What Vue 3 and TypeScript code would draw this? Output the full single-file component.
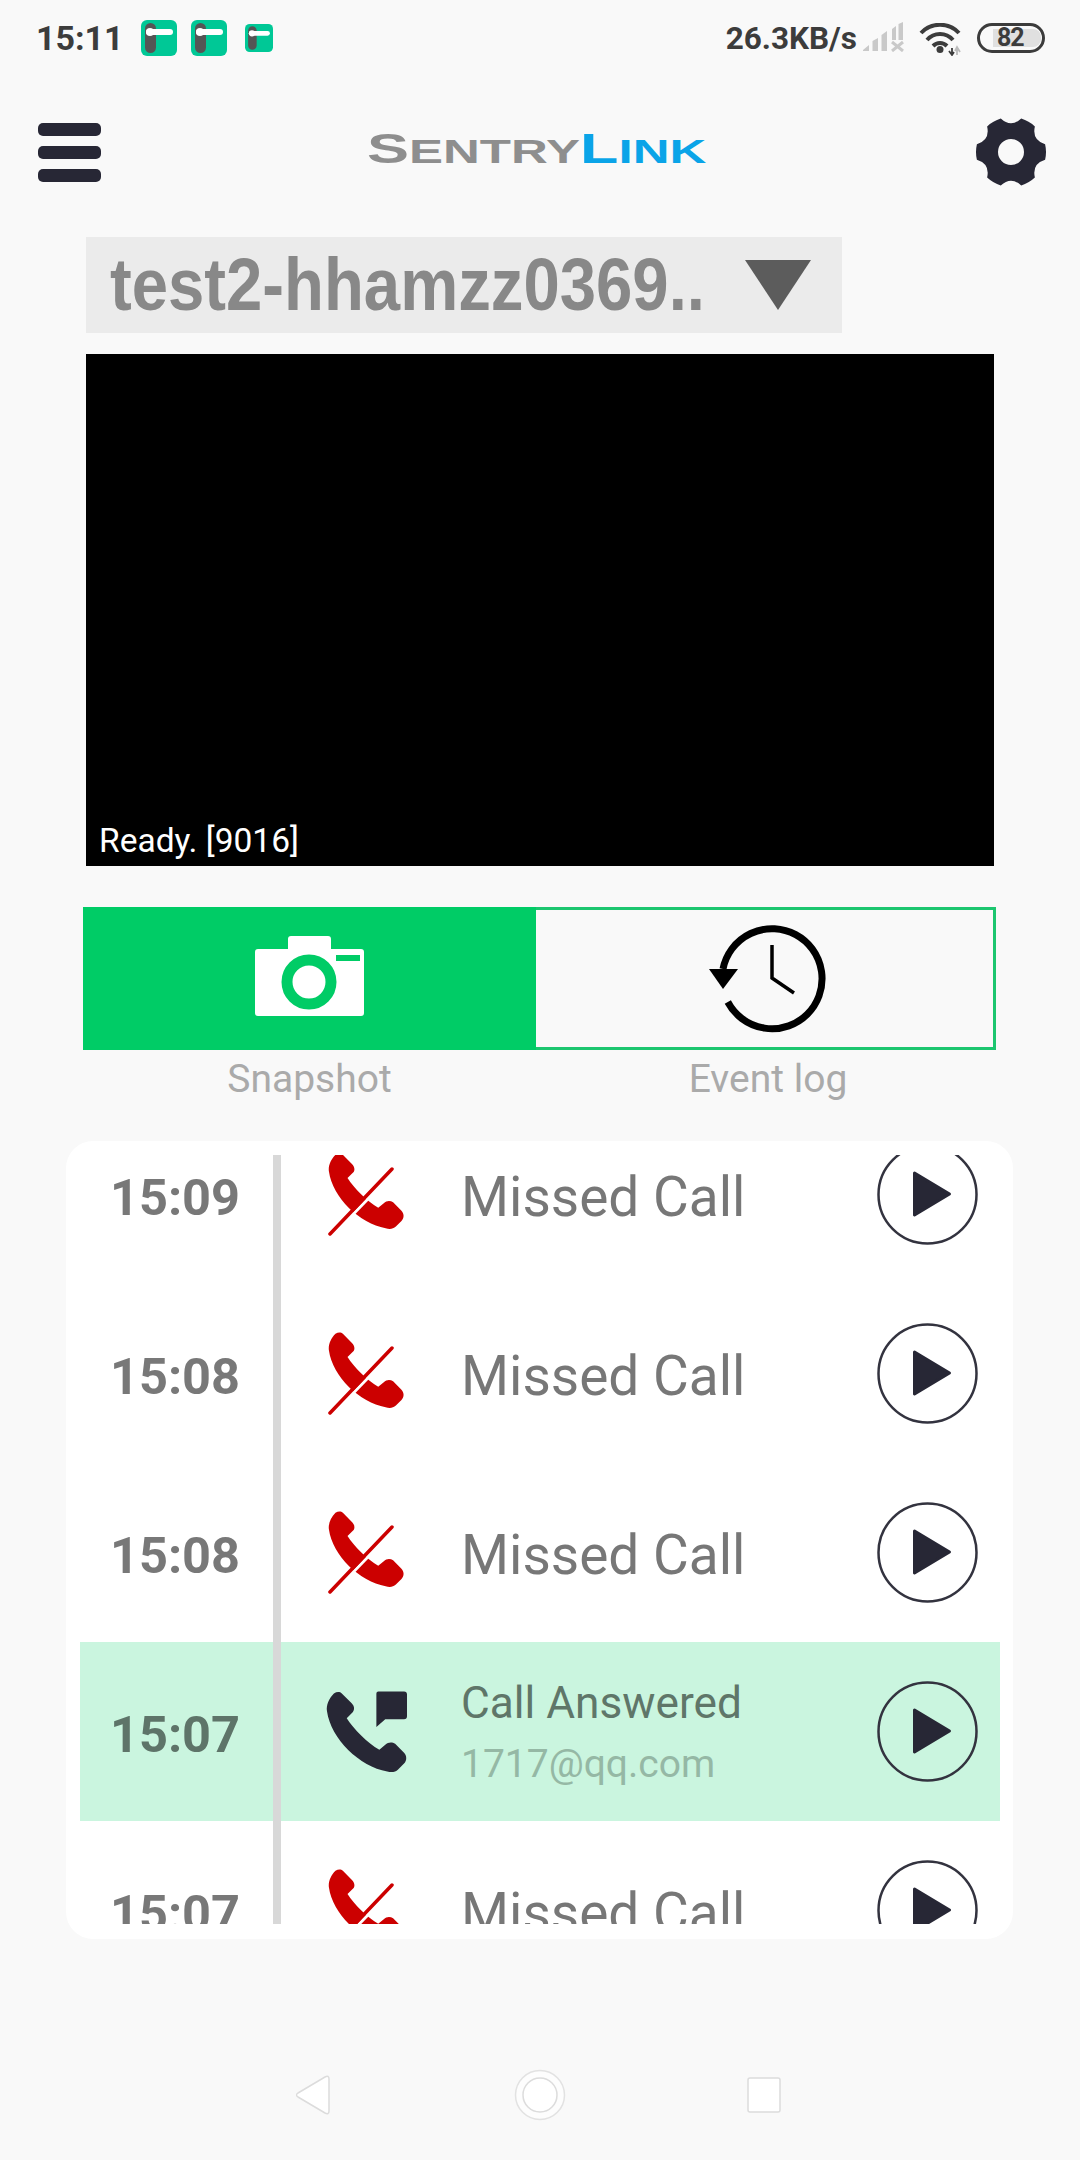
<script setup lang="ts">
interface CallRow {
  time: string
  title: string
  sub?: string
  answered: boolean
}

const rows: CallRow[] = [
  { time: '15:09', title: 'Missed Call', answered: false },
  { time: '15:08', title: 'Missed Call', answered: false },
  { time: '15:08', title: 'Missed Call', answered: false },
  { time: '15:07', title: 'Call Answered', sub: '1717@qq.com', answered: true },
  { time: '15:07', title: 'Missed Call', answered: false }
]

const phonePath =
  'M8 2C11 0 14 0 16 2L26 12C29 15 29 19 27 21L21 27C28 38 42 52 54 59L60 54C63 51 67 51 70 53L79 62C82 65 82 70 79 73L73 79C70 82 66 82 62 81C34 76 5 48 1 20C0 14 3 7 8 2Z'

// six wide lobes with shallow valleys between them
const polar = (deg: number, r: number) => {
  const a = (deg * Math.PI) / 180
  return `${(36 + r * Math.cos(a)).toFixed(2)} ${(36 + r * Math.sin(a)).toFixed(2)}`
}
const gearPath = (() => {
  let d = `M${polar(-13, 35)}`
  for (let k = 0; k < 6; k++) {
    const c = k * 60
    d += `A35 35 0 0 1 ${polar(c + 13, 35)}`
    d += `Q${polar(c + 30, 24)} ${polar(c + 47, 35)}`
  }
  return d + 'Z'
})()
</script>

<template>
  <div class="page">
    <div class="status">
      <span class="clock">15:11</span>
      <svg class="note" width="36" height="36" viewBox="0 0 36 36" v-for="n in 2" :key="n">
        <rect width="36" height="36" rx="6" fill="#00c896" />
        <rect x="4" y="3" width="11" height="30" rx="5.5" fill="#555" />
        <rect x="5" y="9" width="27" height="6" rx="3" fill="#fff" />
        <circle cx="9" cy="12" r="4" fill="#fff" />
      </svg>
      <svg class="note small" width="28" height="28" viewBox="0 0 36 36">
        <rect width="36" height="36" rx="6" fill="#00c896" />
        <rect x="4" y="3" width="11" height="30" rx="5.5" fill="#555" />
        <rect x="5" y="9" width="27" height="6" rx="3" fill="#fff" />
        <circle cx="9" cy="12" r="4" fill="#fff" />
      </svg>
      <span class="speed">26.3KB/s</span>
      <svg class="signal" width="41" height="30" viewBox="0 0 41 30" fill="#c9c9c9">
        <path d="M0 28L6 23V29H0ZM9.500 19L15 16V29H9.500ZM18.500 13L24 9V29H18.500Z" />
        <path d="M29 7L33 4V18H29ZM35.500 2L40 0V18H35.500Z" />
        <path d="M29 20L40 29M40 20L29 29" stroke="#c9c9c9" stroke-width="3" fill="none" />
      </svg>
      <svg class="wifi" width="44" height="33" viewBox="0 0 44 33" fill="none" stroke="#3c3c3c" stroke-width="4">
        <path d="M2 10C12 -1 30 -1 40 10" />
        <path d="M8 17C15 9 27 9 34 17" />
        <path d="M14 23C18 19 24 19 28 23" />
        <circle cx="21" cy="26.500" r="3.500" fill="#3c3c3c" stroke="none" />
        <path d="M33 25V32M30 28L33 32L35 29" stroke-width="1.800" />
        <path d="M38 32V25M36 28L38 24L41 29" stroke="#bbb" stroke-width="1.800" />
      </svg>
      <div class="battery"><span class="level"></span><span class="pct">82</span></div>
    </div>

    <div class="header">
      <div class="burger"><i></i><i></i><i></i></div>
      <div class="logo">
        <div class="logo-text">
          <span class="grey"><span class="cap">S</span>ENTRY</span><span class="blue"><span class="cap">L</span>INK</span>
        </div>
      </div>
      <svg class="gear" width="72" height="72" viewBox="0 0 72 72">
        <path :d="gearPath + 'M49 36A13 13 0 1 0 23 36A13 13 0 1 0 49 36Z'" fill="#272735" fill-rule="evenodd" />
      </svg>
    </div>

    <div class="select">
      <span class="select-name">test2-hhamzz0369..</span>
      <svg width="66" height="50" viewBox="0 0 66 50"><path d="M0 0H66L33 50Z" fill="#5c5c5c" /></svg>
    </div>

    <div class="video">
      <span class="video-status">Ready. [9016]</span>
    </div>

    <div class="tabs">
      <div class="tab on">
        <svg class="camera" width="109" height="80" viewBox="0 0 109 80">
          <path d="M3 13H33V3Q33 0 36 0H73Q76 0 76 3V13H106Q109 13 109 16V77Q109 80 106 80H3Q0 80 0 77V16Q0 13 3 13Z" fill="#fff" />
          <rect x="81" y="19" width="24" height="6" fill="#00cc66" />
          <circle cx="54" cy="46" r="22" fill="none" stroke="#00cc66" stroke-width="11" />
        </svg>
      </div>
      <div class="tab">
        <svg class="history" width="118" height="108" viewBox="0 0 118 108" fill="none" stroke="#000">
          <path d="M18.800 77A50 50 0 1 0 14 44" stroke-width="7" />
          <path d="M0 44H29L14 64Z" fill="#000" stroke="none" />
          <path d="M63 20V53L85 68" stroke-width="3.500" />
        </svg>
      </div>
    </div>
    <div class="tab-labels">
      <span>Snapshot</span>
      <span>Event log</span>
    </div>

    <div class="card">
      <div class="list">
        <div class="scroller">
          <div v-for="(row, i) in rows" :key="i" :class="['row', { answered: row.answered }]">
            <span class="time">{{ row.time }}</span>
            <span class="rule"></span>
            <div class="kind">
              <svg v-if="row.answered" width="81" height="82" viewBox="0 0 82 82">
                <path :d="phonePath" fill="#272735" />
                <path d="M53 0H79Q82 0 82 3V25Q82 28 79 28H60L51 36V2Q51 0 53 0Z" fill="#272735" />
              </svg>
              <svg v-else width="76" height="84" viewBox="0 0 76 84">
                <path :d="phonePath" fill="#cc0000" transform="scale(.93)" />
                <path d="M67 18L5 82" stroke="#fff" stroke-width="3" />
                <path d="M64 16L2 81" stroke="#cc0000" stroke-width="3.500" stroke-linecap="round" />
              </svg>
            </div>
            <div class="info">
              <template v-if="row.sub">
                <span class="title">{{ row.title }}</span>
                <span class="sub">{{ row.sub }}</span>
              </template>
              <span v-else class="title big">{{ row.title }}</span>
            </div>
            <svg class="play" width="101" height="101" viewBox="0 0 101 101">
              <circle cx="50.500" cy="50.500" r="49" fill="none" stroke="#33333f" stroke-width="2.500" />
              <path d="M37.500 29L72.500 50L37.500 71Z" fill="#272735" stroke="#272735" stroke-width="3" stroke-linejoin="round" />
            </svg>
          </div>
        </div>
      </div>
    </div>

    <div class="nav">
      <svg width="34" height="40" viewBox="0 0 34 40">
        <path d="M2 18L29 2Q33 0 33 4V36Q33 40 29 38L2 22Q-1 20 2 18Z" fill="#fff" stroke="#dcdcdc" stroke-width="1.500" />
      </svg>
      <svg width="52" height="52" viewBox="0 0 52 52">
        <circle cx="26" cy="26" r="24.500" fill="#fdfdfd" stroke="#e2e2e2" stroke-width="1.500" />
        <circle cx="26" cy="26" r="17" fill="#fff" stroke="#dcdcdc" stroke-width="1.500" />
      </svg>
      <svg class="recents" width="34" height="36" viewBox="0 0 34 36">
        <rect x="1" y="1" width="32" height="34" rx="2" fill="#fff" stroke="#dcdcdc" stroke-width="1.500" />
      </svg>
    </div>
  </div>
</template>

<style>
html,
body {
  margin: 0;
  background: #f9f9f9;
}
</style>

<style scoped>
.page {
  width: 1080px;
  height: 2160px;
  background: #f9f9f9;
  display: flex;
  flex-direction: column;
  font-family: Roboto, "Liberation Sans", sans-serif;
  overflow: hidden;
}

/* status bar */
.status {
  height: 76px;
  display: flex;
  align-items: center;
  padding: 0 35px 0 36px;
  color: #3c3c3c;
  font-weight: 700;
  font-size: 31.5px;
}
.clock {
  font-size: 34px;
  margin-right: 17px;
}
.note {
  margin-right: 14px;
}
.note.small {
  margin-left: 4px;
}
.speed {
  margin-left: auto;
  margin-right: 6px;
}
.signal {
  margin-right: 15px;
  margin-top: -2px;
}
.wifi {
  margin-right: 14px;
  margin-top: 3px;
}
.battery {
  position: relative;
  width: 68px;
  height: 30px;
  box-sizing: border-box;
  border: 3px solid #3c3c3c;
  border-radius: 15px;
  display: flex;
  align-items: center;
  margin-top: -1px;
}
.level {
  position: absolute;
  left: 13px;
  top: 3px;
  width: 48px;
  height: 18px;
  border-radius: 0 8px 8px 0;
  background: #e0e0e0;
}
.pct {
  position: relative;
  font-size: 25px;
  line-height: 1;
  margin-left: 17px;
  letter-spacing: -1px;
}

/* header */
.header {
  height: 152px;
  display: flex;
  align-items: center;
  padding: 0 33px 0 38px;
}
.burger {
  width: 63px;
  display: flex;
  flex-direction: column;
  gap: 10px;
  padding-top: 1px;
}
.burger i {
  display: block;
  height: 13px;
  border-radius: 5px;
  background: #272735;
}
.logo {
  flex: 1;
  display: flex;
  margin-left: 266px;
  padding-bottom: 6px;
}
.logo-text {
  font-family: "Liberation Sans", sans-serif;
  font-weight: 700;
  font-size: 34px;
  line-height: 1;
  white-space: nowrap;
  transform: scaleX(1.5);
  transform-origin: left center;
}
.cap {
  font-size: 42px;
}
.grey {
  color: #8e8e8e;
}
.blue {
  color: #0aa4e8;
}

/* device select */
.select {
  margin: 9px 0 0 86px;
  width: 756px;
  height: 96px;
  box-sizing: border-box;
  padding-left: 24px;
  background: #ebebeb;
  display: flex;
  align-items: center;
}
.select-name {
  flex: 1 1 0;
  min-width: 0;
  font-family: "Liberation Sans", sans-serif;
  font-weight: 700;
  font-size: 74px;
  line-height: 1;
  color: #888;
  white-space: nowrap;
  transform: scaleX(0.882);
  transform-origin: left center;
}
.select svg {
  margin: 0 31px 0 0;
  flex: none;
}

/* video */
.video {
  margin: 21px 0 0 86px;
  width: 908px;
  height: 512px;
  background: #000;
  display: flex;
  align-items: flex-end;
}
.video-status {
  color: #fff;
  font-size: 33.5px;
  line-height: 1;
  padding: 0 0 9px 13px;
}

/* snapshot / event log */
.tabs {
  margin: 41px 0 0 83px;
  width: 913px;
  height: 143px;
  display: grid;
  grid-template-columns: 453px 460px;
}
.tab {
  box-sizing: border-box;
  border: solid #1cc66f;
  border-width: 3px 3px 3px 0;
  display: flex;
  align-items: center;
  justify-content: center;
}
.tab.on {
  background: #00cc66;
  border: none;
}
.camera {
  margin-bottom: 5px;
}
.history {
  margin-left: 7px;
}
.tab-labels {
  margin-left: 83px;
  width: 917px;
  height: 91px;
  display: grid;
  grid-template-columns: 453px 464px;
  box-sizing: border-box;
  padding-top: 7px;
  color: #aaa;
  font-size: 39px;
  line-height: 44px;
  text-align: center;
}

/* call list */
.card {
  margin-left: 66px;
  width: 947px;
  height: 798px;
  box-sizing: border-box;
  padding: 14px 13px 15px 14px;
  background: #fff;
  border-radius: 27px;
}
.list {
  height: 769px;
  overflow: hidden;
}
.scroller {
  margin-top: -50px;
}
.row {
  height: 179px;
  display: flex;
  align-items: center;
}
.row.answered {
  background: #caf5df;
}
.time {
  width: 193px;
  box-sizing: border-box;
  padding: 5px 3px 0 0;
  text-align: center;
  font-size: 50.5px;
  font-weight: 700;
  color: #787878;
}
.answered .time {
  color: #5e7469;
}
.rule {
  width: 8px;
  height: 100%;
  background: #d8d8d8;
}
.kind {
  width: 133px;
  padding-left: 47px;
  display: flex;
  align-items: center;
  box-sizing: content-box;
}
.answered .kind svg {
  margin-left: -2px;
}
.info {
  flex: 1;
  display: flex;
  flex-direction: column;
}
.title {
  font-size: 44.2px;
  line-height: 52px;
  color: #5f7669;
}
.title.big {
  font-size: 55px;
  padding-top: 5px;
  color: #777;
}
.sub {
  font-size: 39px;
  line-height: 52px;
  margin-top: 9px;
  color: #95b8a5;
}
.answered .info {
  padding-top: 3.5px;
}
.play {
  margin-right: 22px;
  flex: none;
}

/* android nav */
.nav {
  margin-top: auto;
  height: 52px;
  padding: 0 0 39px 296px;
  display: flex;
  align-items: center;
  gap: 184px;
}
.recents {
  margin-left: -3px;
}
</style>
